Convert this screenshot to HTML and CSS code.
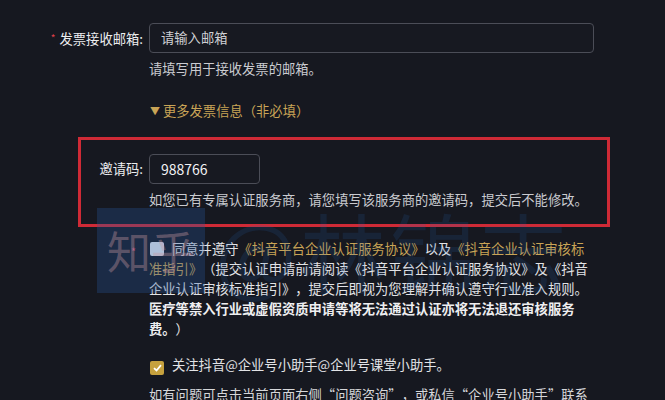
FILE: index.html
```html
<!DOCTYPE html>
<html lang="zh-CN">
<head>
  <meta charset="UTF-8" />
  <title>企业认证</title>
  <link rel="stylesheet" href="styles.css">
</head>
<body>
  <div class="form">

    <!-- 发票邮箱 -->
    <div class="row">
      <label class="label"><span class="req">*</span>发票接收邮箱:</label>
      <div class="field">
        <div class="input wide">请输入邮箱</div>
        <div class="hint">请填写用于接收发票的邮箱。</div>
      </div>
    </div>

    <div class="more"><span class="tri">▼</span> 更多发票信息（非必填）</div>

    <!-- 邀请码 (highlighted) -->
    <div class="highlight">
      <div class="row">
        <label class="label small">邀请码:</label>
        <div class="field">
          <div class="input short value">988766</div>
          <div class="hint">如您已有专属认证服务商，请您填写该服务商的邀请码，提交后不能修改。</div>
        </div>
      </div>
    </div>

    <!-- 协议 -->
    <div class="agree">
      <span class="req-mark">*</span>
      <p class="para"><span class="box"></span>同意并遵守<a>《抖音平台企业认证服务协议》</a>以及<a>《抖音企业认证审核标准指引》</a>（提交认证申请前请阅读《抖音平台企业认证服务协议》及《抖音企业认证审核标准指引》，提交后即视为您理解并确认遵守行业准入规则。<b>医疗等禁入行业或虚假资质申请等将无法通过认证亦将无法退还审核服务费。</b>）</p>
    </div>

    <div class="agree follow">
      <p class="para"><span class="box checked"><svg width="9" height="8" viewBox="0 0 9 8"><path d="M1 4.2 L3.5 6.5 L8 1.2" fill="none" stroke="#fff" stroke-width="1.8"/></svg></span>关注抖音@企业号小助手@企业号课堂小助手。</p>
    </div>

    <p class="para tip">如有问题可点击当前页面右侧“问题咨询”，或私信“企业号小助手”联系</p>

  </div>

  <!-- watermark -->
  <div class="wm">
    <div class="wm-logo">知乎</div>
    <div class="wm-text">@林锦志</div>
  </div>
</body>
</html>
```

FILE: styles.css
```css
body {
  margin: 0;
  background: #161820;
  color: #e4e4e6;
  font-family: "Microsoft YaHei", "Noto Sans CJK SC", sans-serif;
  font-size: 13.3px;
  text-spacing-trim: space-all;
  overflow: hidden;
  height: 400px;
  position: relative;
}

.form {
  padding-top: 23px;
}

.row {
  display: flex;
}

/* label column ends where the input starts */
.label {
  width: 143px;
  padding-right: 6px;
  text-align: right;
  line-height: 30px;
  color: #ecedef;
}

.label.small {
  width: 62px;
}

.req {
  color: #e0404a;
  font-size: 10px;
  margin-right: 4px;
  vertical-align: 2px;
}

.input {
  box-sizing: border-box;
  height: 30px;
  border: 1px solid #4b4d57;
  border-radius: 4px;
  padding: 0 11px;
  line-height: 28px;
  color: #cfd0d4;
  background: #171921;
}

.input.wide { width: 445px; }
.input.short { width: 111px; }
.input.value { color: #f2f2f4; font-size: 14px; }

.hint {
  margin-top: 8px;
  line-height: 16px;
  color: #cacbd0;
}

.more {
  margin: 25px 0 0 150px;
  line-height: 18px;
  color: #c9a456;
}

.tri {
  font-size: 10px;
  vertical-align: 1px;
}

/* red outline around invite code */
.highlight {
  margin: 17px 0 0 78px;
  width: 532px;
  height: 90px;
  box-sizing: border-box;
  border: 3px solid #cf2a36;
  padding-top: 14px;
}

.agree {
  position: relative;
  margin: 12px 0 0 149px;
  width: 444px;
}

.req-mark {
  position: absolute;
  left: -18px;
  top: 4px;
  color: #d4416a;
  font-size: 11px;
}

.para {
  margin: 0;
  line-height: 20px;
  color: #e2e3e6;
}

.para a {
  color: #c9a456;
}

.para b {
  color: #eeeef0;
}

.box {
  display: inline-block;
  box-sizing: border-box;
  width: 14px;
  height: 14px;
  border-radius: 2px;
  background: #e8ecf4;
  margin: 0 8px 0 1px;
  vertical-align: -2px;
}

.box.checked {
  background: #c6a13e;
  text-align: center;
  line-height: 12px;
}

.follow {
  margin-top: 16px;
}

.tip {
  margin: 10px 0 0 149px;
  width: 470px;
  color: #d6d7da;
}

/* watermark sits over the content */
.wm {
  position: absolute;
  left: 97px;
  top: 205px;
  display: flex;
  align-items: center;
  pointer-events: none;
}

.wm-logo {
  width: 108px;
  height: 85px;
  background: rgba(40, 90, 160, 0.3);
  color: rgba(200, 150, 160, 0.4);
  font-size: 44px;
  line-height: 85px;
  text-align: center;
}

.wm-text {
  margin-left: 10px;
  font-size: 86px;
  line-height: 90px;
  color: rgba(40, 100, 180, 0.16);
  letter-spacing: 4px;
}
```
